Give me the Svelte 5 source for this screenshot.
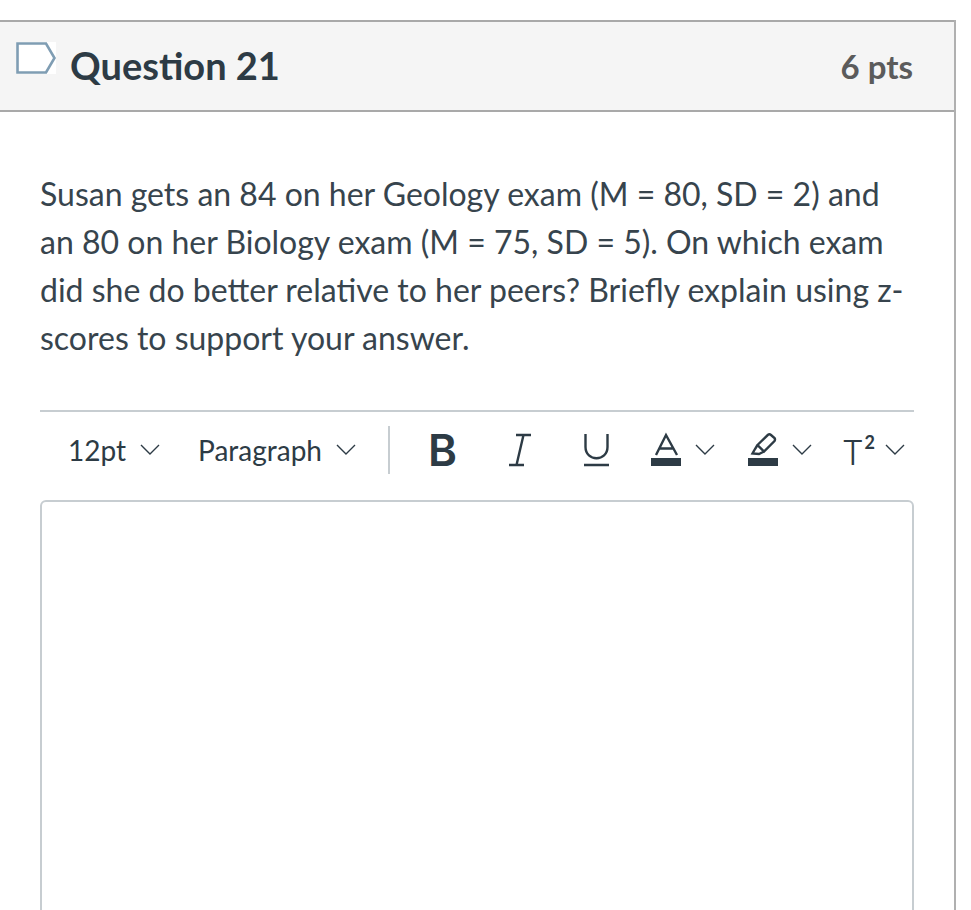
<script>
  const question =
    'Susan gets an 84 on her Geology exam (M = 80, SD = 2) and an 80 on her Biology exam (M = 75, SD = 5). On which exam did she do better relative to her peers? Briefly explain using z-scores to support your answer.';
</script>

{#snippet chevron()}
  <svg class="chevron" width="20" height="12" viewBox="0 0 20 12" aria-hidden="true">
    <path d="M1 1 L10 10 L19 1" />
  </svg>
{/snippet}

<div class="question">
  <header class="question-header">
    <svg class="flag" width="40" height="32" viewBox="0 0 40 32" aria-hidden="true">
      <path d="M1.5 1.5 H30 L38.5 16 L30 30.5 H1.5 Z" />
    </svg>
    <h2>Question 21</h2>
    <span class="points">6 pts</span>
  </header>

  <div class="question-body">
    <p>{question}</p>

    <div class="toolbar">
      <span class="select size">12pt {@render chevron()}</span>
      <span class="select block">Paragraph {@render chevron()}</span>
      <span class="divider"></span>

      <span class="bold">B</span>

      <svg class="tool italic" width="22" height="32" viewBox="0 0 22 32" aria-hidden="true">
        <path d="M7 1 H22 M14.5 1 L7.5 31 M0 31 H15" />
      </svg>

      <svg class="tool underline" width="25" height="32" viewBox="0 0 25 32" aria-hidden="true">
        <path d="M1.5 0 V13 C1.5 28 23.5 28 23.5 13 V0 M0 31 H25" />
      </svg>

      <span class="group color">
        <svg width="30" height="32" viewBox="0 0 30 32" aria-hidden="true">
          <path d="M5 21 L15 1 L26 21 M8.5 14.5 H22.5" />
          <rect class="fill" x="0" y="24" width="30" height="8" />
        </svg>
        {@render chevron()}
      </span>

      <span class="group highlight">
        <svg width="30" height="32" viewBox="0 0 30 32" aria-hidden="true">
          <path d="M9.5 11 L20 0.8 Q21.5 -0.2 23 1 L26.5 4 Q27.5 5.5 26.5 7 L16 17.5 Z M9.5 11 L7 15 L4.5 19.5 L11 20 L16 17.5" />
          <rect class="fill" x="0" y="24" width="30" height="8" />
        </svg>
        {@render chevron()}
      </span>

      <span class="group super">
        <span class="tee">T<sup>2</sup></span>
        {@render chevron()}
      </span>
    </div>

    <div class="editor"></div>
  </div>
</div>

<style>
  :global(body) {
    margin: 0;
    background: #fff;
    overflow: hidden;
  }

  .question {
    width: 954px;
    height: 890px;
    margin-top: 20px;
    border-right: 2px solid #b0b0b0;
    font-family: Lato, "Open Sans", sans-serif;
    color: #2d3b45;
    overflow: hidden;
  }

  .question-header {
    display: flex;
    align-items: center;
    height: 88px;
    padding: 0 41px 0 16px;
    background: #f5f5f5;
    border-top: 2px solid #a9a9a9;
    border-bottom: 2px solid #a9a9a9;
  }

  .flag {
    align-self: flex-start;
    margin-top: 20px;
    margin-right: 15px;
    background: #fff;
  }

  .flag path {
    fill: #fff;
    stroke: #7f9db3;
    stroke-width: 2.6;
  }

  h2 {
    margin: 0 0 0 -1px;
    font-size: 38px;
    line-height: 1.2;
    font-weight: 700;
    flex: 1;
  }

  .points {
    font-size: 33px;
    font-weight: 700;
    color: #5b5b5b;
  }

  .question-body {
    padding: 58px 40px 0;
  }

  p {
    margin: 0;
    font-size: 32px;
    line-height: 48px;
    color: #37444d;
    padding-right: 1px;
  }

  .toolbar {
    display: flex;
    align-items: center;
    box-sizing: border-box;
    height: 90px;
    padding: 0 0 12px 28px;
    margin-top: 48px;
    border-top: 2px solid #c7cdd1;
    font-size: 28px;
  }

  .select {
    display: flex;
    align-items: center;
    gap: 14px;
  }

  .size {
    margin-right: 38px;
  }

  .divider {
    width: 2px;
    height: 48px;
    margin-left: 32px;
    background: #c7cdd1;
  }

  .bold {
    margin-left: 38px;
    font-family: Inter, Lato, sans-serif;
    font-size: 44px;
    font-weight: 600;
    line-height: 1;
  }

  .chevron {
    flex: none;
  }

  .chevron path {
    fill: none;
    stroke: #2d3b45;
    stroke-width: 1.4;
  }

  svg path {
    fill: none;
    stroke: #2d3b45;
    stroke-width: 2.4;
  }

  svg {
    overflow: visible;
  }

  .fill {
    fill: #2d3b45;
  }

  .tool.italic {
    margin-left: 52px;
  }

  .tool.underline {
    margin-left: 53px;
  }

  .group {
    display: flex;
    align-items: center;
    gap: 14px;
  }

  .color {
    margin-left: 42px;
  }

  .highlight {
    margin-left: 33px;
  }

  .super {
    margin-left: 30px;
    gap: 10px;
  }

  .tee {
    font-family: Inter, Lato, sans-serif;
    font-size: 34px;
    font-weight: 300;
    line-height: 1;
    position: relative;
    top: 3px;
  }

  sup {
    font-family: Lato, sans-serif;
    font-size: 18px;
    font-weight: 700;
    vertical-align: 16px;
    line-height: 0;
    margin-left: 1px;
  }

  .editor {
    height: 500px;
    border: 2px solid #c7cdd1;
    border-radius: 6px;
    box-sizing: border-box;
  }
</style>
